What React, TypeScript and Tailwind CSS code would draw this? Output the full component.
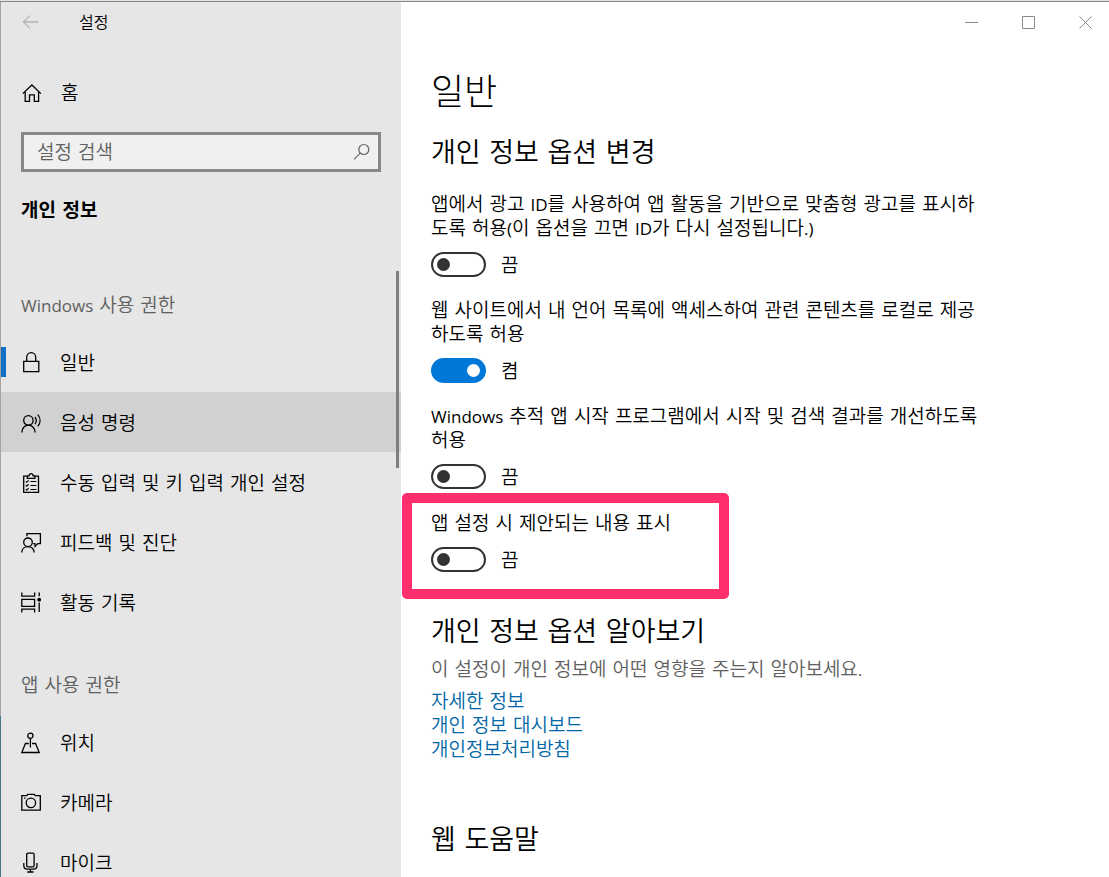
import { useState } from 'react'
import type { ReactNode } from 'react'

function Icon({ children }: { children: ReactNode }) {
  return (
    <svg
      viewBox="0 0 20 20"
      className="h-5 w-5 shrink-0 overflow-visible"
      fill="none"
      stroke="currentColor"
      strokeWidth={1.3}
      aria-hidden="true"
    >
      {children}
    </svg>
  )
}

const HomeIcon = () => (
  <Icon>
    <path d="M1.8 10.6 10.9 2l9 8.6M4.2 9v9.4h4.3v-6.6h4.8v6.6h4.3V9" />
  </Icon>
)

const LockIcon = () => (
  <Icon>
    <path d="M2.7 9.3h15.1v10.3H2.7zM5.7 9.3V5.2a4.5 4.5 0 0 1 9 0v4.1" />
  </Icon>
)

const VoiceIcon = () => (
  <Icon>
    <circle cx="7.4" cy="8.4" r="4.7" />
    <path d="M.8 20.6c0-4.3 3-7.5 6.6-7.5s6.8 3.2 6.8 7.5M14 5c1.5 2 1.5 5 0 7.2M16.8 2.7c3 3.5 3 8.2 0 11.6" />
  </Icon>
)

const ClipboardIcon = () => (
  <Icon>
    <path d="M6 4.2H2.7v16.2h14.8V4.2H14M6.3 3.8H8c.2-1.5 1-2.2 2.1-2.2s1.9.7 2.1 2.2h1.7v2.6H6.3z" />
    <path
      d="m4.8 9.3 1 1 1.8-2M4.8 13.2l1 1 1.8-2M4.8 17.1l1 1 1.8-2M9.5 9.5h5.8M9.5 13.5h5.8M9.5 17.5h5.8"
      strokeWidth={1.1}
    />
  </Icon>
)

const FeedbackIcon = () => (
  <Icon>
    <circle cx="7" cy="10.3" r="4.3" />
    <path d="M.8 20.6c0-3.8 2.7-6 6.2-6s6.2 2.2 6.2 6M5.9 4.2V1.7h13.5v9.9h-2.5l-2.9 2.8v-2.8h-1.8" />
  </Icon>
)

const ActivityIcon = () => (
  <Icon>
    <path d="M.8.6v3.5h12.8V.6M.8 7.4h12.8v7H.8zM.8 20.4v-3.3h12.8v3.3M18.2.6v3.6M18.2 10.5v9.6" />
    <circle cx="18.2" cy="7.7" r="1.9" fill="currentColor" stroke="none" />
  </Icon>
)

const LocationIcon = () => (
  <Icon>
    <circle cx="9.4" cy="3.7" r="2.6" />
    <path d="M9.4 6.3v9.2M7.8 11.5H4.4L.8 20.5h17.4l-3.6-9H11" />
  </Icon>
)

const CameraIcon = () => (
  <Icon>
    <path d="M.8 3.7h5l1-1.3h6.5l1 1.3h5v14.4H.8z" />
    <circle cx="9.9" cy="10.9" r="4.7" />
    <path d="M3 6.2h1.5" />
  </Icon>
)

const MicIcon = () => (
  <Icon>
    <rect x="5.7" y="1.2" width="7.4" height="13.6" rx="1.2" />
    <path d="M2.8 11v2.5c0 2.3 1.4 3.7 3.6 3.7h6c2.2 0 3.6-1.4 3.6-3.7V11M9.4 17.2v3M6.3 20h6.2" />
  </Icon>
)

type NavItem = { label: string; icon: () => ReactNode; state?: 'selected' | 'hovered' }

const windowsItems: NavItem[] = [
  { label: '일반', icon: LockIcon, state: 'selected' },
  { label: '음성 명령', icon: VoiceIcon, state: 'hovered' },
  { label: '수동 입력 및 키 입력 개인 설정', icon: ClipboardIcon },
  { label: '피드백 및 진단', icon: FeedbackIcon },
  { label: '활동 기록', icon: ActivityIcon },
]

const appItems: NavItem[] = [
  { label: '위치', icon: LocationIcon },
  { label: '카메라', icon: CameraIcon },
  { label: '마이크', icon: MicIcon },
]

function Latin({ children }: { children: ReactNode }) {
  return (
    <span className="font-['Open_Sans','Noto_Sans',sans-serif] text-[17px] leading-none font-normal">
      {children}
    </span>
  )
}

function NavList({ items }: { items: NavItem[] }) {
  return (
    <ul>
      {items.map(({ label, icon: ItemIcon, state }) => (
        <li key={label}>
          <a
            href="#"
            aria-current={state === 'selected' ? 'page' : undefined}
            className={`relative flex h-[60px] items-center gap-[19px] pl-5 ${state === 'hovered' ? 'bg-[#d1d1d1]' : ''}`}
          >
            {state === 'selected' && <span className="absolute left-0 h-[30px] w-[5px] bg-[#0f70c4]" />}
            <ItemIcon />
            <span className="pt-0.5">{label}</span>
          </a>
        </li>
      ))}
    </ul>
  )
}

function ToggleSetting({ id, label, initial = false }: { id: string; label: ReactNode; initial?: boolean }) {
  const [on, setOn] = useState(initial)

  return (
    <div>
      <label htmlFor={id} className="block max-w-[554px]">
        {label}
      </label>
      <div className="mt-3 flex items-center gap-[15px]">
        <input
          id={id}
          type="checkbox"
          role="switch"
          checked={on}
          onChange={(e) => setOn(e.target.checked)}
          className="flex h-[25px] w-[55px] appearance-none items-center rounded-full border-2 border-[#333] px-1 before:h-[13px] before:w-[13px] before:rounded-full before:bg-[#333] checked:justify-end checked:border-[#0078d7] checked:bg-[#0078d7] checked:before:bg-white"
        />
        <span>{on ? '켬' : '끔'}</span>
      </div>
    </div>
  )
}

function Sidebar() {
  return (
    <aside className="relative w-[400px] shrink-0 bg-[#e6e6e6]">
      <div className="flex h-10 items-center pl-[21px]">
        <button type="button" aria-label="뒤로" className="text-[#999]">
          <svg viewBox="0 0 17 16" className="h-4 w-[17px]" fill="none" stroke="currentColor" aria-hidden="true">
            <path d="M16.5 8H1.5M8 1.5 1.5 8 8 14.5" />
          </svg>
        </button>
        <span className="ml-10 pt-0.5 text-base">설정</span>
      </div>

      <a href="#" className="mt-[21px] flex h-[60px] items-center gap-5 pl-5">
        <HomeIcon />
        <span>홈</span>
      </a>

      <div className="mx-5 mt-[9px] flex h-10 items-center border-3 border-[#888] bg-[#f0f0f0] pr-2">
        <input
          type="search"
          aria-label="설정 검색"
          placeholder="설정 검색"
          className="min-w-0 flex-1 bg-transparent pl-[13px] outline-none placeholder:text-[#606060]"
        />
        <svg
          viewBox="0 0 18 18"
          className="h-[18px] w-[18px]"
          fill="none"
          stroke="#666"
          strokeWidth={1.2}
          aria-hidden="true"
        >
          <circle cx="11.8" cy="6.5" r="5" />
          <path d="M8.2 10.1 2 16.3" />
        </svg>
      </div>

      <h2 className="mt-[26px] pl-5 font-bold">개인 정보</h2>

      <nav className="mt-[71px]">
        <h3 className="pl-5 text-[#606060]">
          <Latin>Windows</Latin> 사용 권한
        </h3>
        <div className="mt-[15px]">
          <NavList items={windowsItems} />
        </div>
        <h3 className="mt-[41px] pl-5 text-[#606060]">앱 사용 권한</h3>
        <div className="mt-[15px]">
          <NavList items={appItems} />
        </div>
      </nav>

      <div className="absolute top-[269px] right-0.5 h-[197px] w-[3px] bg-[#7f7f7f]" />
    </aside>
  )
}

function CaptionButtons() {
  return (
    <div className="flex h-10 justify-end gap-2.5 text-[#8a8a8a]">
      <button type="button" aria-label="최소화" className="grid w-[47px] place-items-center">
        <svg viewBox="0 0 13 13" className="h-[13px] w-[13px]" stroke="currentColor" aria-hidden="true">
          <path d="M0 6.5h13" />
        </svg>
      </button>
      <button type="button" aria-label="최대화" className="grid w-[47px] place-items-center">
        <svg viewBox="0 0 13 13" className="h-[13px] w-[13px]" fill="none" stroke="currentColor" aria-hidden="true">
          <path d="M.5.5h12v12H.5z" />
        </svg>
      </button>
      <button type="button" aria-label="닫기" className="grid w-[47px] place-items-center">
        <svg viewBox="0 0 13 13" className="h-[13px] w-[13px]" stroke="currentColor" aria-hidden="true">
          <path d="m.5.5 12 12M12.5.5l-12 12" />
        </svg>
      </button>
    </div>
  )
}

export default function App() {
  return (
    <div className="flex h-screen flex-col overflow-hidden bg-white font-['DejaVu_Sans','Noto_Sans_CJK_KR',sans-serif] text-[19px] leading-6 font-[350] text-black">
      <div className="h-0.5 shrink-0 border-b border-[#858585] bg-[#e4e4e4]" />
      <div className="flex min-h-0 flex-1">
        <div className="flex w-px shrink-0 flex-col bg-[#a3a3a3]">
          <div className="mt-auto h-[161px] bg-[#4b7489]" />
        </div>
        <Sidebar />

        <main className="min-w-0 flex-1">
          <CaptionButtons />
          <div className="pl-[30px]">
            <h1 className="mt-[27px] text-4xl leading-[48px] font-light">일반</h1>
            <h2 className="mt-[18px] text-[27px] leading-9">개인 정보 옵션 변경</h2>

            <div className="mt-[21px] flex flex-col gap-[21px]">
              <ToggleSetting
                id="ad-id"
                label={
                  <>
                    앱에서 광고 <Latin>ID</Latin>를 사용하여 앱 활동을 기반으로 맞춤형 광고를 표시하도록 허용
                    <Latin>(</Latin>이 옵션을 끄면 <Latin>ID</Latin>가 다시 설정됩니다<Latin>.)</Latin>
                  </>
                }
              />
              <ToggleSetting
                id="language-list"
                label="웹 사이트에서 내 언어 목록에 액세스하여 관련 콘텐츠를 로컬로 제공하도록 허용"
                initial
              />
              <ToggleSetting
                id="track-launches"
                label={
                  <>
                    <Latin>Windows</Latin> 추적 앱 시작 프로그램에서 시작 및 검색 결과를 개선하도록 허용
                  </>
                }
              />
              <div className="relative pt-px">
                <ToggleSetting id="suggested-content" label="앱 설정 시 제안되는 내용 표시" />
                {/* highlight frame */}
                <div className="pointer-events-none absolute -top-[17px] -left-[29px] h-[106px] w-[327px] rounded-[5px] border-10 border-[#ff2e6c]" />
              </div>
            </div>

            <h2 className="mt-[42px] text-[27px] leading-9">개인 정보 옵션 알아보기</h2>
            <p className="mt-[7px] text-[#606060]">
              이 설정이 개인 정보에 어떤 영향을 주는지 알아보세요<Latin>.</Latin>
            </p>
            <ul className="mt-2 text-[#0066a6]">
              <li>
                <a href="#">자세한 정보</a>
              </li>
              <li>
                <a href="#">개인 정보 대시보드</a>
              </li>
              <li>
                <a href="#">개인정보처리방침</a>
              </li>
            </ul>

            <h2 className="mt-[61px] text-[27px] leading-9">웹 도움말</h2>
          </div>
        </main>
      </div>
    </div>
  )
}
